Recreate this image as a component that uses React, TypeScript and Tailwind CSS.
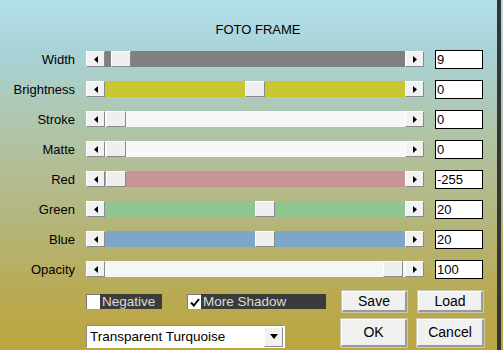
import React from 'react';

interface SliderRowProps {
  label: string;
  track: string;
  pos: number;
  value: string;
}

const raised = 'border-t border-l border-t-white border-l-white border-b border-r border-b-[#8a8a8a] border-r-[#8a8a8a]';

const ArrowButton: React.FC<{ dir: 'left' | 'right' }> = ({ dir }) => (
  <div className={`flex h-full w-[19px] shrink-0 items-center justify-center bg-[#f2f2f2] ${raised}`}>
    <svg width="4" height="7" viewBox="0 0 4 7">
      {dir === 'left' ? <polygon points="4,0 4,7 0,3.5" fill="#000" /> : <polygon points="0,0 0,7 4,3.5" fill="#000" />}
    </svg>
  </div>
);

const SliderRow: React.FC<SliderRowProps> = ({ label, track, pos, value }) => (
  <div className="flex h-[30px] items-center">
    <div className="w-[75px] text-right text-[13px] leading-[15px] text-black">{label}</div>
    <div className="ml-[11px] flex h-[16px] w-[338px]">
      <ArrowButton dir="left" />
      <div className={`flex flex-1 ${track}`}>
        <div style={{ width: pos }} />
        <div className={`h-full w-[20px] bg-[#efefef] ${raised}`} />
      </div>
      <ArrowButton dir="right" />
    </div>
    <div className="ml-[11px] flex h-[19px] w-[48px] items-center border border-black bg-white pl-[1px] text-[13px] leading-[15px] text-black">
      {value}
    </div>
  </div>
);

const Checkbox: React.FC<{ label: string; checked?: boolean; width: string }> = ({ label, checked, width }) => (
  <div className="flex h-[15px] items-stretch">
    <div className="flex w-[14px] items-center justify-center border-t border-l border-t-[#7a7a7a] border-l-[#7a7a7a] bg-white">
      {checked && (
        <svg width="10" height="9" viewBox="0 0 10 9">
          <polyline points="1,4.5 3.8,7.5 9,1" fill="none" stroke="#000" strokeWidth="2" />
        </svg>
      )}
    </div>
    <div className={`${width} flex items-center bg-[#3b3b3b] pl-[2px] text-[13.5px] leading-[15px] text-[#dcdcdc]`}>{label}</div>
  </div>
);

const PushButton: React.FC<{ label: string; className: string }> = ({ label, className }) => (
  <div
    className={`flex items-center justify-center border-t border-l border-t-white border-l-white border-b-2 border-r-2 border-b-[#9a9a9a] border-r-[#9a9a9a] bg-[#f0f0f0] text-[14px] text-black shadow-[0_0_0_1px_#c9c9b0] ${className}`}
  >
    {label}
  </div>
);

const rows: SliderRowProps[] = [
  { label: 'Width', track: 'bg-[#808080]', pos: 6, value: '9' },
  { label: 'Brightness', track: 'bg-[#c9c62f]', pos: 140, value: '0' },
  { label: 'Stroke', track: 'bg-[#f6f6f6]', pos: 1, value: '0' },
  { label: 'Matte', track: 'bg-[#f8f8f8]', pos: 1, value: '0' },
  { label: 'Red', track: 'bg-[#c79494]', pos: 1, value: '-255' },
  { label: 'Green', track: 'bg-[#8ec68e]', pos: 150, value: '20' },
  { label: 'Blue', track: 'bg-[#7ea6c9]', pos: 150, value: '20' },
  { label: 'Opacity', track: 'bg-[#f6f6f6]', pos: 278, value: '100' },
];

export default function App() {
  return (
    <div className="flex h-[350px] w-[503px] overflow-hidden bg-[linear-gradient(180deg,#b4e0ea_0%,#a9d2d8_15%,#b0c4a6_38%,#b4b67e_62%,#b9aa52_85%,#bca53e_100%)] font-['Liberation_Sans',Arial,sans-serif]">
      <div className="flex w-[497px] flex-col">
        <div className="mt-[22px] h-[15px] pl-[19px] text-center text-[13px] leading-[15px] text-black">FOTO FRAME</div>
        <div className="mt-[7px] flex flex-col">
          {rows.map((r) => (
            <SliderRow key={r.label} {...r} />
          ))}
        </div>

        <div className="mt-[7px] flex h-[21px] items-center pl-[86px]">
          <Checkbox label="Negative" width="w-[62px]" />
          <div className="ml-[25px]">
            <Checkbox label="More Shadow" checked width="w-[125px]" />
          </div>
          <PushButton label="Save" className="ml-[16px] h-[21px] w-[65px]" />
          <PushButton label="Load" className="ml-[11px] h-[21px] w-[65px]" />
        </div>

        <div className="mt-[7px] flex items-start pl-[86px]">
          <div className="mt-[6px] flex h-[23px] w-[199px] items-center border-t border-l border-t-[#8a8a8a] border-l-[#8a8a8a] border-b border-r border-b-white border-r-white bg-white">
            <div className="flex-1 pl-[3px] text-[13.5px] leading-[15px] text-black">Transparent Turquoise</div>
            <div className={`mr-[1px] flex h-[20px] w-[19px] items-center justify-center bg-[#f2f2f2] ${raised}`}>
              <svg width="8" height="5" viewBox="0 0 8 5">
                <polygon points="0,0 8,0 4,5" fill="#000" />
              </svg>
            </div>
          </div>
          <PushButton label="OK" className="ml-[56px] h-[28px] w-[66px]" />
          <PushButton label="Cancel" className="ml-[10px] h-[28px] w-[67px]" />
        </div>
      </div>
      <div className="w-[4px] bg-[#353535]" />
    </div>
  );
}
